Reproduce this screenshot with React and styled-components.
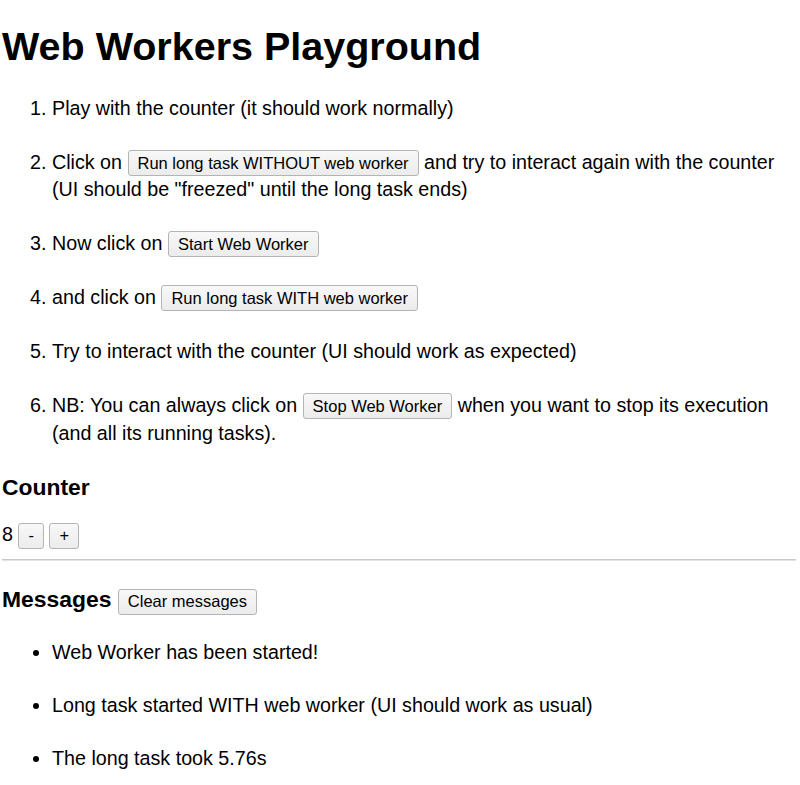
import React, { useState } from "react";
import styled, { createGlobalStyle } from "styled-components";

const GlobalStyle = createGlobalStyle`
  html, body {
    margin: 0;
    background: #ffffff;
  }
  body {
    padding: 0 4px 0 2px;
    font-family: "Liberation Sans", Arial, Helvetica, sans-serif;
    font-size: 19.7px;
    color: #000000;
  }
`;

const Page = styled.main`
  display: block;
`;

const Title = styled.h1`
  font-size: 39.5px;
  font-weight: bold;
  line-height: 45px;
  margin: 24px 0 25.5px;
`;

const Steps = styled.ol`
  margin: 0 0 27px;
  padding-left: 50px;
`;

const Step = styled.li`
  line-height: 27.5px;
  & + & {
    margin-top: 26.5px;
  }
`;

const SectionTitle = styled.h3`
  font-size: 22.9px;
  font-weight: bold;
  line-height: 26.3px;
  margin: ${(p) => p.$top || "0"} 0 ${(p) => p.$bottom || "0"};
`;

const Button = styled.button`
  font-family: "Liberation Sans", Arial, Helvetica, sans-serif;
  font-size: 16.5px;
  line-height: 18.7px;
  height: 26px;
  padding: 0 9px;
  margin: 0;
  color: #000000;
  background: linear-gradient(#f8f8f8, #ececec);
  border: 1px solid #b4b4b4;
  border-radius: 3px;
  box-sizing: border-box;
  vertical-align: baseline;
  cursor: pointer;
`;

const CounterRow = styled.div`
  line-height: 27.5px;
`;

const Divider = styled.hr`
  margin: 10px 0 0;
  border: none;
  border-top: 1px solid #c8c8c8;
  border-bottom: 1px solid #e4e4e4;
  height: 0;
`;

const Messages = styled.ul`
  margin: 24.5px 0 0;
  padding-left: 50px;
`;

const Message = styled.li`
  line-height: 27.5px;
  & + & {
    margin-top: 25.5px;
  }
`;

export default function App() {
  const [count, setCount] = useState(8);
  const [messages, setMessages] = useState([
    "Web Worker has been started!",
    "Long task started WITH web worker (UI should work as usual)",
    "The long task took 5.76s",
  ]);

  return (
    <Page>
      <GlobalStyle />
      <Title>Web Workers Playground</Title>
      <Steps>
        <Step>Play with the counter (it should work normally)</Step>
        <Step>
          Click on <Button>Run long task WITHOUT web worker</Button> and try to
          interact again with the counter (UI should be "freezed" until the long
          task ends)
        </Step>
        <Step>
          Now click on <Button>Start Web Worker</Button>
        </Step>
        <Step>
          and click on <Button>Run long task WITH web worker</Button>
        </Step>
        <Step>Try to interact with the counter (UI should work as expected)</Step>
        <Step>
          NB: You can always click on <Button>Stop Web Worker</Button> when you
          want to stop its execution (and all its running tasks).
        </Step>
      </Steps>
      <SectionTitle $bottom="21px">Counter</SectionTitle>
      <CounterRow>
        {count} <Button onClick={() => setCount(count - 1)}>-</Button>{" "}
        <Button onClick={() => setCount(count + 1)}>+</Button>
      </CounterRow>
      <Divider />
      <SectionTitle $top="25.5px">
        Messages <Button onClick={() => setMessages([])}>Clear messages</Button>
      </SectionTitle>
      <Messages>
        {messages.map((m, i) => (
          <Message key={i}>{m}</Message>
        ))}
      </Messages>
    </Page>
  );
}
